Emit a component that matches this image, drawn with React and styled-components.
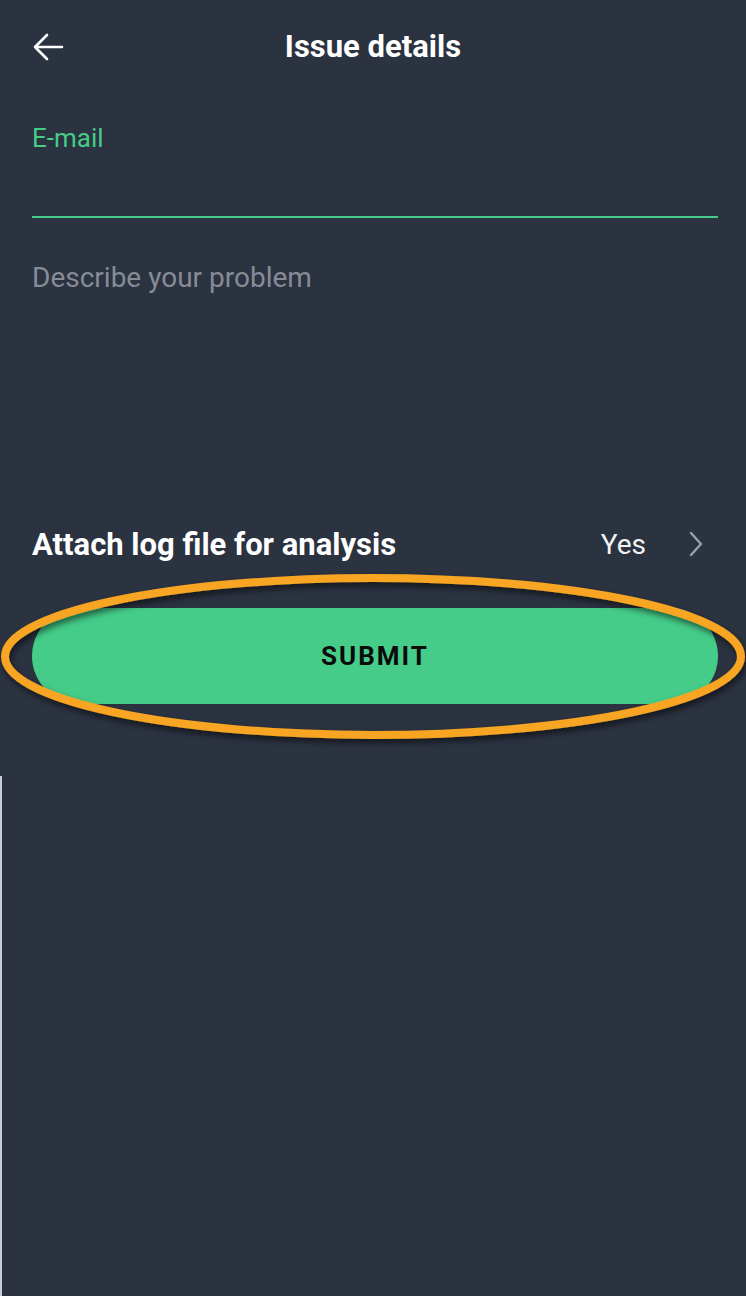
import React from "react";
import styled, { createGlobalStyle } from "styled-components";

const Global = createGlobalStyle`
  html, body { margin: 0; padding: 0; background: #2b3240; }
  body { font-family: Roboto, "Noto Sans", sans-serif; }
  * { box-sizing: border-box; }
`;

const Page = styled.div`
  width: 746px;
  min-height: 1296px;
  background: #2b3240;
  display: flex;
  flex-direction: column;
  color: #ffffff;
`;

const Header = styled.header`
  position: relative;
  height: 94px;
  display: flex;
  align-items: center;
  justify-content: center;
`;

const BackButton = styled.button`
  position: absolute;
  left: 28px;
  top: 27px;
  width: 40px;
  height: 40px;
  padding: 0;
  border: none;
  background: transparent;
  display: flex;
  align-items: center;
  justify-content: center;
`;

const Title = styled.h1`
  margin: 0;
  font-size: 31px;
  font-weight: 700;
  line-height: 36px;
`;

const Form = styled.div`
  display: flex;
  flex-direction: column;
  padding: 0 28px 0 32px;
`;

const Field = styled.div`
  display: flex;
  flex-direction: column;
  padding-top: 29px;
  border-bottom: 2px solid #44cc88;
  height: 124px;
`;

const FieldLabel = styled.label`
  font-size: 26px;
  line-height: 30px;
  color: #44cc88;
`;

const TextArea = styled.div`
  height: 298px;
  padding-top: 44px;
  font-size: 28px;
  line-height: 32px;
  color: #868c96;
`;

const OptionRow = styled.div`
  display: flex;
  align-items: center;
  height: 56px;
`;

const OptionLabel = styled.div`
  flex: 1;
  font-size: 31px;
  font-weight: 700;
`;

const OptionValue = styled.div`
  font-size: 28px;
  color: #f2f2f2;
  margin-right: 42px;
`;

const SubmitWrap = styled.div`
  position: relative;
  margin-top: 36px;
`;

const SubmitButton = styled.button`
  width: 100%;
  height: 96px;
  border: none;
  border-radius: 48px;
  background: #44cc88;
  color: #0b0b0b;
  font-family: Roboto, sans-serif;
  font-size: 26px;
  font-weight: 700;
  letter-spacing: 2px;
`;

const Highlight = styled.svg`
  position: absolute;
  left: -32px;
  top: -36px;
  pointer-events: none;
  overflow: visible;
`;

const Filler = styled.div`
  flex: 1;
  margin-top: 72px;
  border-left: 2px solid #c9cdd3;
`;

export default function App() {
  return (
    <>
      <Global />
      <Page>
        <Header>
          <BackButton aria-label="Back">
            <svg width="34" height="34" viewBox="0 0 34 34" fill="none">
              <path d="M31 17H4M16 5L4 17l12 12" stroke="#fff" strokeWidth="2.6" strokeLinecap="round" strokeLinejoin="round" />
            </svg>
          </BackButton>
          <Title>Issue details</Title>
        </Header>
        <Form>
          <Field>
            <FieldLabel>E-mail</FieldLabel>
          </Field>
          <TextArea>Describe your problem</TextArea>
          <OptionRow>
            <OptionLabel>Attach log file for analysis</OptionLabel>
            <OptionValue>Yes</OptionValue>
            <svg width="16" height="26" viewBox="0 0 16 26" fill="none" style={{ marginRight: 14 }}>
              <path d="M3 2l10 11L3 24" stroke="#9aa0a8" strokeWidth="2.4" strokeLinecap="round" strokeLinejoin="round" />
            </svg>
          </OptionRow>
          <SubmitWrap>
            <SubmitButton>SUBMIT</SubmitButton>
            <Highlight width="746" height="170" viewBox="0 0 746 170">
              <defs>
                <filter id="sh" x="-10%" y="-30%" width="120%" height="160%">
                  <feDropShadow dx="2" dy="4" stdDeviation="3" floodColor="#000" floodOpacity="0.55" />
                </filter>
              </defs>
              <ellipse cx="373" cy="84.5" rx="368" ry="78.5" fill="none" stroke="#f7a521" strokeWidth="8" filter="url(#sh)" />
            </Highlight>
          </SubmitWrap>
        </Form>
        <Filler />
      </Page>
    </>
  );
}
